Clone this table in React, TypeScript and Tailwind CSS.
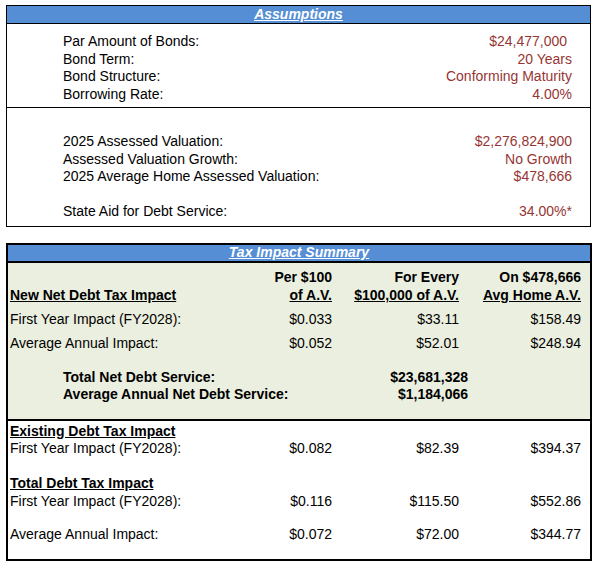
const assumptionsTop = [
  ["Par Amount of Bonds:", "$24,477,000"],
  ["Bond Term:", "20 Years"],
  ["Bond Structure:", "Conforming Maturity"],
  ["Borrowing Rate:", "4.00%"],
];

const assumptionsBottom = [
  ["2025 Assessed Valuation:", "$2,276,824,900"],
  ["Assessed Valuation Growth:", "No Growth"],
  ["2025 Average Home Assessed Valuation:", "$478,666"],
];

function Row({ label, value, pad = false }: { label: string; value: string; pad?: boolean }) {
  return (
    <div className="flex h-[17.5px] items-center justify-between">
      <span>{label}</span>
      <span className={`text-[#963634] ${pad ? "pr-[5px]" : ""}`}>{value}</span>
    </div>
  );
}

function DataRow({
  label,
  values,
  className = "",
}: {
  label: string;
  values: string[];
  className?: string;
}) {
  return (
    <div className={`flex h-[17.5px] items-center pl-[2px] pr-[9px] ${className}`}>
      <span className="flex-1">{label}</span>
      <span className="w-[100px] text-right">{values[0]}</span>
      <span className="w-[127px] text-right">{values[1]}</span>
      <span className="w-[122px] text-right">{values[2]}</span>
    </div>
  );
}

export default function App() {
  return (
    <div className="min-h-[570px] w-[596px] bg-white pt-[5px] font-['Liberation_Sans',Arial,sans-serif] text-[14px] text-black">
      {/* Assumptions */}
      <div className="ml-[6px] w-[585px] border border-black">
        <div className="flex h-[18px] items-center justify-center border-b border-black bg-[#558ed5]">
          <span className="font-bold italic text-white underline">Assumptions</span>
        </div>
        <div className="pb-[4px] pl-[56px] pr-[18px] pt-[9px]">
          {assumptionsTop.map(([l, v], i) => (
            <Row key={l} label={l} value={v} pad={i === 0} />
          ))}
        </div>
        <div className="border-t border-black pb-[5px] pl-[56px] pr-[18px] pt-[25px]">
          {assumptionsBottom.map(([l, v]) => (
            <Row key={l} label={l} value={v} />
          ))}
          <div className="h-[17.5px]" />
          <Row label="State Aid for Debt Service:" value="34.00%*" />
        </div>
      </div>

      {/* Tax Impact Summary */}
      <div className="ml-[6px] mt-[16px] w-[586px] border-2 border-black">
        <div className="flex h-[18px] items-center justify-center border-b-2 border-black bg-[#558ed5]">
          <span className="font-bold italic text-white underline">Tax Impact Summary</span>
        </div>
        <div className="border-b-2 border-black bg-[#ebefdf] pb-[15px] pt-[6px]">
          <div className="flex h-[18px] items-center pl-[2px] pr-[9px] font-bold">
            <span className="flex-1" />
            <span className="w-[100px] text-right">Per $100</span>
            <span className="w-[127px] text-right">For Every</span>
            <span className="w-[122px] text-right">On $478,666</span>
          </div>
          <div className="flex h-[18px] items-center pl-[2px] pr-[9px] font-bold underline">
            <span className="flex-1">New Net Debt Tax Impact</span>
            <span className="w-[100px] text-right">of A.V.</span>
            <span className="w-[127px] text-right">$100,000 of A.V.</span>
            <span className="w-[122px] text-right">Avg Home A.V.</span>
          </div>
          <DataRow className="mt-[6px]" label="First Year Impact (FY2028):" values={["$0.033", "$33.11", "$158.49"]} />
          <DataRow className="mt-[7px]" label="Average Annual Impact:" values={["$0.052", "$52.01", "$248.94"]} />
          <div className="mt-[16px] font-bold">
            <div className="flex h-[17.5px] items-center pl-[55px] pr-[122px]">
              <span className="flex-1">Total Net Debt Service:</span>
              <span>$23,681,328</span>
            </div>
            <div className="flex h-[17.5px] items-center pl-[55px] pr-[122px]">
              <span className="flex-1">Average Annual Net Debt Service:</span>
              <span>$1,184,066</span>
            </div>
          </div>
        </div>
        <div className="pb-[16px] pt-[2px]">
          <div className="flex h-[17.5px] items-center pl-[2px] font-bold underline">Existing Debt Tax Impact</div>
          <DataRow label="First Year Impact (FY2028):" values={["$0.082", "$82.39", "$394.37"]} />
          <div className="h-[17.5px]" />
          <div className="flex h-[17.5px] items-center pl-[2px] font-bold underline">Total Debt Tax Impact</div>
          <DataRow label="First Year Impact (FY2028):" values={["$0.116", "$115.50", "$552.86"]} />
          <div className="h-[15.5px]" />
          <DataRow label="Average Annual Impact:" values={["$0.072", "$72.00", "$344.77"]} />
        </div>
      </div>
    </div>
  );
}
